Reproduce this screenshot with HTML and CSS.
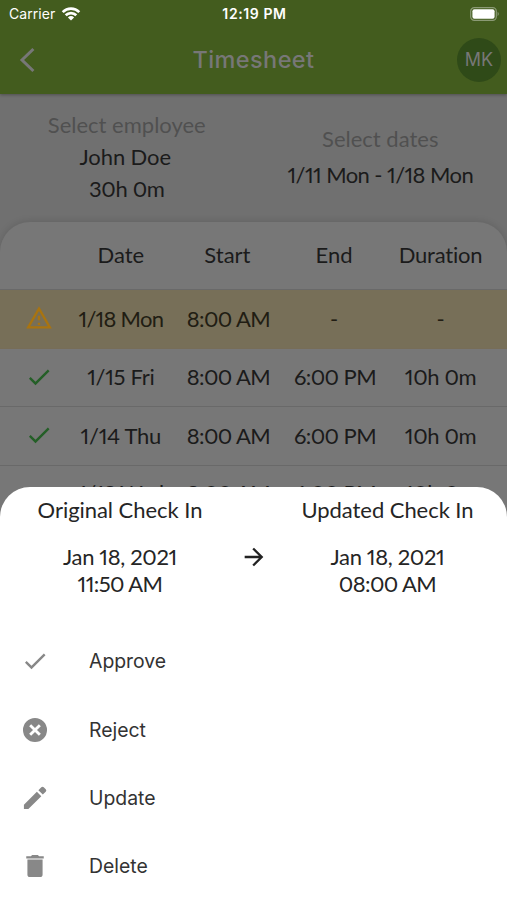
FILE: index.html
```html
<!DOCTYPE html>
<html lang="en">
<head>
<meta charset="utf-8">
<title>Timesheet</title>
<link rel="stylesheet" href="styles.css">
</head>
<body>
<div class="screen">
  <header class="top">
    <div class="status">
      <div class="carrier"><span class="carrier-name">Carrier</span>
        <svg width="20" height="16" viewBox="0 0 20 16" fill="none" stroke="#fff" stroke-width="2.7"><path d="M1.7 6.1a11.8 11.8 0 0 1 16.6 0M4.7 9.3a7.5 7.5 0 0 1 10.6 0"/><path d="M10 14.6 6.9 11.4a4.5 4.5 0 0 1 6.2 0z" fill="#fff" stroke="none"/></svg>
      </div>
      <span class="clock">12:19 PM</span>
      <svg class="battery" width="30" height="14" viewBox="0 0 30 14"><rect x=".7" y=".7" width="25.6" height="12.6" rx="3.6" fill="none" stroke="#8b9a75" stroke-width="1.2"/><rect x="2.4" y="2.3" width="22.2" height="9.4" rx="2" fill="#fff"/><path d="M27.6 4.8q2.4 2.2 0 4.4z" fill="#8b9a75"/></svg>
    </div>
    <nav class="bar">
      <svg class="back" width="20" height="26" viewBox="0 0 20 26" fill="none" stroke="#777" stroke-width="3"><path d="M15.4 2 4 13l11.4 11"/></svg>
      <h1 class="title">Timesheet</h1>
      <span class="avatar">MK</span>
    </nav>
  </header>
  <section class="filters">
    <div class="filter employee"><span class="label">Select employee</span><span class="name">John Doe</span><span class="len">30h 0m</span></div>
    <div class="filter dates"><span class="label">Select dates</span><span class="range">1/11 Mon - 1/18 Mon</span></div>
  </section>
  <main class="table">
    <div class="row head"><span></span><span>Date</span><span>Start</span><span>End</span><span class="h-dur">Duration</span></div>
    <div class="row warn"><svg width="28" height="28" viewBox="0 0 24 24" fill="#a97410"><path d="M12 5.99 19.53 19H4.47L12 5.99M12 2 1 21h22L12 2zm1 14h-2v2h2v-2zm0-6h-2v4h2v-4z"/></svg><span class="day">1/18 Mon</span><span class="time">8:00 AM</span><span>-</span><span>-</span></div>
    <div class="row"><svg width="28" height="28" viewBox="0 0 24 24" fill="#245f27"><path d="M9 16.17 4.83 12l-1.42 1.41L9 19 21 7l-1.41-1.41z"/></svg><span class="day fri">1/15 Fri</span><span class="time">8:00 AM</span><span class="time">6:00 PM</span><span class="len">10h 0m</span></div>
    <div class="row"><svg width="28" height="28" viewBox="0 0 24 24" fill="#245f27"><path d="M9 16.17 4.83 12l-1.42 1.41L9 19 21 7l-1.41-1.41z"/></svg><span class="day fri">1/14 Thu</span><span class="time">8:00 AM</span><span class="time">6:00 PM</span><span class="len">10h 0m</span></div>
    <div class="row last"><span></span><span class="day">1/13 Wed</span><span class="time">8:00 AM</span><span class="time">6:00 PM</span><span class="len">10h 0m</span></div>
  </main>
  <section class="sheet">
    <div class="compare">
      <div class="check"><h2 class="check-title">Original Check In</h2><p class="date">Jan 18, 2021</p><p class="hour">11:50 AM</p></div>
      <svg class="arrow" width="28" height="28" viewBox="0 0 24 24" fill="#222"><path d="m12 4-1.410 1.410L16.170 11H4v2h12.170l-5.580 5.590L12 20l8-8z"/></svg>
      <div class="check"><h2 class="check-title">Updated Check In</h2><p class="date">Jan 18, 2021</p><p class="hour">08:00 AM</p></div>
    </div>
    <ul class="actions">
      <li><svg width="28" height="28" viewBox="0 0 24 24"><path d="M9 16.17 4.83 12l-1.42 1.41L9 19 21 7l-1.41-1.41z"/></svg><span>Approve</span></li>
      <li><svg width="28" height="28" viewBox="0 0 24 24"><path d="M12 1.7a10.3 10.3 0 1 0 0 20.6 10.3 10.3 0 0 0 0-20.6zm5 13.6L15.3 17 12 13.7 8.7 17 7 15.3l3.3-3.3L7 8.7 8.7 7l3.3 3.3L15.3 7 17 8.7 13.7 12z"/></svg><span>Reject</span></li>
      <li><svg width="28" height="28" viewBox="0 0 24 24"><path d="M2.5 17.7v3.8h3.8L17.4 10.400l-3.800-3.800zM21.200 6.600a1.500 1.500 0 0 0 0-2.100l-1.700-1.700a1.500 1.500 0 0 0-2.100 0l-2.500 2.500 3.800 3.800z"/></svg><span>Update</span></li>
      <li><svg width="28" height="28" viewBox="0 0 24 24"><path d="M5.500 19.500c0 1.100.9 2 2 2h9c1.100 0 2-.9 2-2V6.500h-13zM19.500 3.600h-4l-1-1h-5l-1 1h-4v2h15z"/></svg><span>Delete</span></li>
    </ul>
  </section>
</div>
</body>
</html>
```
FILE: styles.css
```css
* { box-sizing: border-box; }
body { margin: 0; background: #707070; }
h1, h2, p, ul { margin: 0; padding: 0; font-weight: 400; }
.screen { position: relative; width: 507px; height: 900px; overflow: hidden; font-family: Lato, sans-serif; font-size: 22px; font-variant-numeric: proportional-nums; font-variant-ligatures: none; color: #1b1b1b; background: #707070; }
.top { height: 94px; background: #435c1e; box-shadow: 0 1px 3px rgba(0,0,0,.3); font-family: Inter, sans-serif; }
.status { display: grid; grid-template-columns: 1fr auto 1fr; align-items: center; height: 27px; padding: 0 7px 0 9px; color: #fff; font-size: 14px; }
.carrier { display: flex; align-items: center; gap: 6px; }
.carrier-name { letter-spacing: .05px; }
.clock { font-weight: 600; font-size: 14px; letter-spacing: .6px; }
.battery { justify-self: end; }
.bar { display: grid; grid-template-columns: 50px 1fr 50px; align-items: center; height: 66px; padding-bottom: 1px; }
.back { margin-left: 18px; }
.title { text-align: center; color: #777; font-size: 23.500px; font-weight: 500; letter-spacing: .4px; }
.avatar { width: 44px; height: 44px; border-radius: 50%; background: #2f4a18; color: #777; font-size: 18px; line-height: 44px; text-align: center; }
.filters { display: grid; grid-template-columns: 1fr 1fr; height: 128px; }
.filter { display: flex; flex-direction: column; align-items: center; line-height: 32px; white-space: nowrap; }
.employee { padding-top: 15px; }
.dates { padding-top: 27px; line-height: 36px; }
.label { color: #505050; }
.name { letter-spacing: -.1px; margin-right: 3px; }
.range { letter-spacing: -.58px; }
.table { background: #777; border-radius: 30px 30px 0 0; box-shadow: 0 -1px 7px rgba(0,0,0,.12); }
.row { display: grid; grid-template-columns: 52px repeat(4, 106.6px); align-items: center; justify-items: center; height: 58.6px; padding: 0 0 1px 15.5px; border-bottom: 1px solid #696969; white-space: nowrap; }
.row svg { margin-right: 5px; }
.head { height: 68px; padding-bottom: 2px; }
.h-dur { letter-spacing: -.2px; }
.day { letter-spacing: -.75px; }
.fri { letter-spacing: -.3px; }
.time { letter-spacing: -.6px; margin-left: 2px; }
.len { letter-spacing: -.35px; }
.warn { background: #776f58; border-bottom-color: #776d58; color: #211d13; }
.last { height: 54px; border-bottom: 0; }
.sheet { position: absolute; left: 0; right: 0; top: 487px; bottom: 0; background: #fff; border-radius: 30px 30px 0 0; }
.compare { display: grid; grid-template-columns: 240px 28px 239px; height: 140px; text-align: center; white-space: nowrap; color: #252525; }
.check-title { font-size: 22px; line-height: 28px; margin: 9px 0 19px; letter-spacing: -.05px; }
.date, .hour { font-size: 22px; line-height: 27px; letter-spacing: -.35px; }
.hour { letter-spacing: -.6px; }
.arrow { margin-top: 56px; }
.actions { list-style: none; font-family: Inter, sans-serif; font-size: 19.4px; color: #333; }
.actions li { display: flex; align-items: center; height: 68.4px; padding-left: 21px; gap: 40px; }
.actions svg { fill: #888; }
```
